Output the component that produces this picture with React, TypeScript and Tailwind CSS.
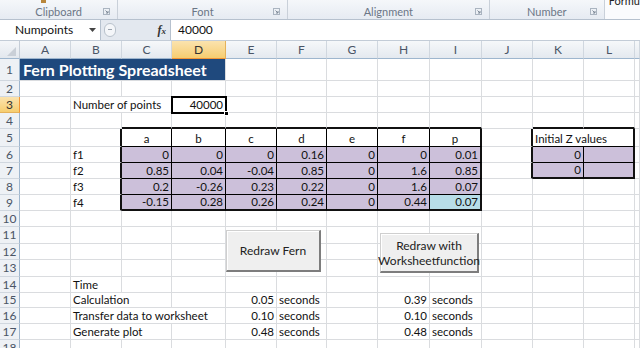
import React from "react";

type Cell = { v: string; right?: boolean; center?: boolean };
type Edge = "grid" | "thin" | "thick" | "none";

const LETTERS = ["A", "B", "C", "D", "E", "F", "G", "H", "I", "J", "K", "L", ""];
const ROW_COUNT = 18;

const DATA: Record<string, Cell> = {
  B3: { v: "Number of points" },
  D3: { v: "40000", right: true },
  C5: { v: "a", center: true },
  D5: { v: "b", center: true },
  E5: { v: "c", center: true },
  F5: { v: "d", center: true },
  G5: { v: "e", center: true },
  H5: { v: "f", center: true },
  I5: { v: "p", center: true },
  K5: { v: "Initial Z values" },
  B6: { v: "f1" },
  B7: { v: "f2" },
  B8: { v: "f3" },
  B9: { v: "f4" },
  B14: { v: "Time" },
  B15: { v: "Calculation" },
  B16: { v: "Transfer data to worksheet" },
  B17: { v: "Generate plot" },
  K6: { v: "0", right: true },
  K7: { v: "0", right: true },
};

const TABLE = [
  ["0", "0", "0", "0.16", "0", "0", "0.01"],
  ["0.85", "0.04", "-0.04", "0.85", "0", "1.6", "0.85"],
  ["0.2", "-0.26", "0.23", "0.22", "0", "1.6", "0.07"],
  ["-0.15", "0.28", "0.26", "0.24", "0", "0.44", "0.07"],
];
TABLE.forEach((vals, i) =>
  vals.forEach((v, j) => {
    DATA[LETTERS[2 + j] + (6 + i)] = { v, right: true };
  })
);

const TIMES = [
  [15, "0.05", "0.39"],
  [16, "0.10", "0.10"],
  [17, "0.48", "0.48"],
] as const;
TIMES.forEach(([r, a, b]) => {
  DATA["E" + r] = { v: a, right: true };
  DATA["F" + r] = { v: "seconds" };
  DATA["H" + r] = { v: b, right: true };
  DATA["I" + r] = { v: "seconds" };
});

// gridlines hidden where text spills into the next cell
const SPILL = new Set(["B3", "B15", "B16", "C16", "B17", "A1", "B1", "C1"]);

const RIGHT: Record<Edge, string> = {
  grid: "border-r border-r-[#dadcdf]",
  thin: "border-r border-r-black",
  thick: "border-r-2 border-r-[#111]",
  none: "",
};
const BOTTOM: Record<Edge, string> = {
  grid: "border-b border-b-[#dadcdf]",
  thin: "border-b border-b-black",
  thick: "border-b-2 border-b-[#111]",
  none: "",
};

function inT1(r: number, c: number) {
  return r >= 5 && r <= 9 && c >= 2 && c <= 8;
}
function inT2(r: number, c: number) {
  return r >= 5 && r <= 7 && c >= 10 && c <= 11;
}

function edges(r: number, c: number): [Edge, Edge] {
  const id = LETTERS[c] + r;
  let right: Edge = SPILL.has(id) ? "none" : "grid";
  let bottom: Edge = "grid";

  if (inT1(r, c)) {
    right = c === 8 ? "thick" : "thin";
    bottom = r === 9 ? "thick" : "thin";
  }
  if (inT2(r, c)) {
    right = c === 11 ? "thick" : "thin";
    bottom = r === 7 ? "thick" : "thin";
    if (r === 5 && c === 10) right = "none";
  }
  if (r === 4 && ((c >= 2 && c <= 8) || c === 10 || c === 11)) bottom = "thick";
  if (c === 1 && r >= 5 && r <= 9) right = "thick";
  if (c === 9 && r >= 5 && r <= 7) right = "thick";
  return [right, bottom];
}

function fill(r: number, c: number) {
  if (r === 1 && c <= 3) return "bg-[#1f497d]";
  if (r === 9 && c === 8) return "bg-[#b7dde8]";
  if (r >= 6 && inT1(r, c)) return "bg-[#ccc0da]";
  if (r >= 6 && inT2(r, c)) return "bg-[#ccc0da]";
  return "";
}

function SheetCell({ r, c }: { r: number; c: number }) {
  const id = LETTERS[c] + r;
  const cell = DATA[id];
  const [right, bottom] = edges(r, c);
  const align = cell?.right
    ? "justify-end pr-[2px]"
    : cell?.center
    ? "justify-center"
    : "justify-start pl-[2px]";
  return (
    <div
      className={`relative box-border flex items-end ${align} ${RIGHT[right]} ${BOTTOM[bottom]} ${fill(r, c)}`}
    >
      {r === 1 && c === 0 && (
        <span className="relative z-10 -mb-[1px] pl-[1px] whitespace-nowrap text-[16px] font-bold leading-[22px] text-white">
          Fern Plotting Spreadsheet
        </span>
      )}
      {cell && (
        <span className="relative z-10 whitespace-nowrap leading-[15px] text-[#111]">
          {cell.v}
        </span>
      )}
    </div>
  );
}

function Launcher() {
  return (
    <svg width="7" height="7" viewBox="0 0 7 7" className="absolute bottom-[4px] right-[7px]">
      <rect x="0.5" y="0.5" width="6" height="6" fill="none" stroke="#aab4c0" />
      <path d="M2.5 2.5 L5 5 M5 3 V5 H3" stroke="#7f8a98" fill="none" />
    </svg>
  );
}

function Group({ label, w }: { label: string; w: string }) {
  return (
    <div className={`relative flex h-full items-center justify-center border-r border-r-[#c9d0d9] ${w}`}>
      <span className="pt-[6px]">{label}</span>
      <Launcher />
    </div>
  );
}

export default function App() {
  const rows = Array.from({ length: ROW_COUNT }, (_, i) => i + 1);
  const cols = LETTERS.map((_, i) => i);

  return (
    <div className="h-[348px] w-[640px] overflow-hidden bg-white font-['Lato',sans-serif] text-[11.5px]">
      {/* Ribbon bottom edge */}
      <div className="flex h-5 border-b border-b-[#b6c1ce] bg-gradient-to-b from-[#f5f7fa] to-[#e6ebf2] text-[11px] text-[#6b7686]">
        <div className="relative flex h-full w-[119px] items-center justify-center border-r border-r-[#c9d0d9]">
          <span className="absolute left-[41px] top-0 h-[3px] w-[5px] bg-[#b8863b]" />
          <span className="pt-[6px]">Clipboard</span>
          <Launcher />
        </div>
        <Group label="Font" w="w-[171px]" />
        <Group label="Alignment" w="w-[203px]" />
        <Group label="Number" w="w-[116px]" />
        <div className="flex-1 bg-[#fafbfd] pl-1 text-[11px] leading-[10px] text-[#222]">
          <span className="-mt-[4px] block">Formu</span>
        </div>
      </div>

      {/* Formula bar */}
      <div className="flex h-[20px] items-center bg-[#e3e8ef]">
        <div className="flex h-full w-[101px] items-center justify-between border-r border-r-[#b6c1ce] bg-white pl-[15px] pr-[4px] text-[12px] text-[#111]">
          <span>Numpoints</span>
          <svg width="7" height="4" viewBox="0 0 7 4">
            <path d="M0 0 H7 L3.5 4 Z" fill="#444" />
          </svg>
        </div>
        <div className="ml-[3px] flex h-[14px] w-[12px] items-center justify-center rounded-full border border-[#b9c2cc] bg-[#f4f6f9]">
          <span className="h-[2px] w-[4px] border-t border-t-[#9aa3ae]" />
        </div>
        <div className="flex h-full w-[54px] items-center justify-end pr-[4px]">
          <span className="font-['Liberation_Serif',serif] text-[12px] font-bold italic text-[#333]">
            f<span className="text-[9px]">x</span>
          </span>
        </div>
        <div className="flex h-full flex-1 items-center border-l border-l-[#b6c1ce] bg-white pl-[7px] text-[12px] text-[#111]">
          40000
        </div>
      </div>
      <div className="h-[1px] bg-[#c3ccd7]" />

      {/* Sheet */}
      <div className="relative grid grid-cols-[20px_51px_51px_50px_54px_51px_50px_51px_52px_52px_51px_51px_51px_5px] grid-rows-[18px_22px_16px_16px_16px_18px_16px_16px_16px_16px_16px_17px_16px_17px_16px_15px_16px_16px_16px]">
        <div className="relative box-border border-b border-r border-b-[#9eb6ce] border-r-[#c5cdd7] bg-gradient-to-b from-[#f4f6f9] to-[#e3e8ee]">
          <svg width="9" height="9" viewBox="0 0 9 9" className="absolute bottom-[2px] right-[3px]">
            <path d="M9 0 V9 H0 Z" fill="#c9cfd7" />
          </svg>
        </div>
        {cols.map((c) => (
          <div
            key={c}
            className={`box-border flex items-center justify-center border-b border-r text-[12px] ${
              c === 3
                ? "border-b-[#f29536] border-r-[#e5b25a] bg-gradient-to-b from-[#fbe3ae] to-[#f6cd6f] text-[#333]"
                : "border-b-[#9eb6ce] border-r-[#d0d7df] bg-gradient-to-b from-[#f6f8fa] to-[#e4e9ef] text-[#4a5566]"
            }`}
          >
            {LETTERS[c]}
          </div>
        ))}
        {rows.map((r) => (
          <React.Fragment key={r}>
            <div
              className={`box-border flex items-center justify-center border-b border-r text-[12px] ${
                r === 3
                  ? "border-b-[#e5b25a] border-r-[#f29536] bg-gradient-to-b from-[#fbe3ae] to-[#f6cd6f] text-[#333]"
                  : "border-b-[#d0d7df] border-r-[#9eb6ce] bg-[#eef1f5] text-[#4a5566]"
              }`}
            >
              {r}
            </div>
            {cols.map((c) => (
              <SheetCell key={c} r={r} c={c} />
            ))}
          </React.Fragment>
        ))}

        {/* Active cell D3 */}
        <div className="pointer-events-none absolute left-[171px] top-[55px] h-[18px] w-[56px] border-2 border-black">
          <span className="absolute -bottom-[4px] -right-[4px] h-[5px] w-[5px] border border-white bg-black" />
        </div>

        {/* Form buttons floating over the sheet */}
        <button className="absolute left-[226px] top-[189px] flex h-[42px] w-[95px] items-center justify-center border border-b-2 border-r-2 border-[#cfcfcf] border-b-[#7d7d7d] border-r-[#7d7d7d] bg-[#efefef] text-[12px] text-[#222] shadow-[inset_1px_1px_0_#fff]">
          Redraw Fern
        </button>
        <button className="absolute left-[380px] top-[192px] flex h-[40px] w-[99px] flex-col items-center justify-center border border-b-2 border-r-2 border-[#cfcfcf] border-b-[#7d7d7d] border-r-[#7d7d7d] bg-[#efefef] text-[12px] leading-[15px] text-[#222] shadow-[inset_1px_1px_0_#fff]">
          <span>Redraw with</span>
          <span>Worksheetfunction</span>
        </button>
      </div>
    </div>
  );
}
